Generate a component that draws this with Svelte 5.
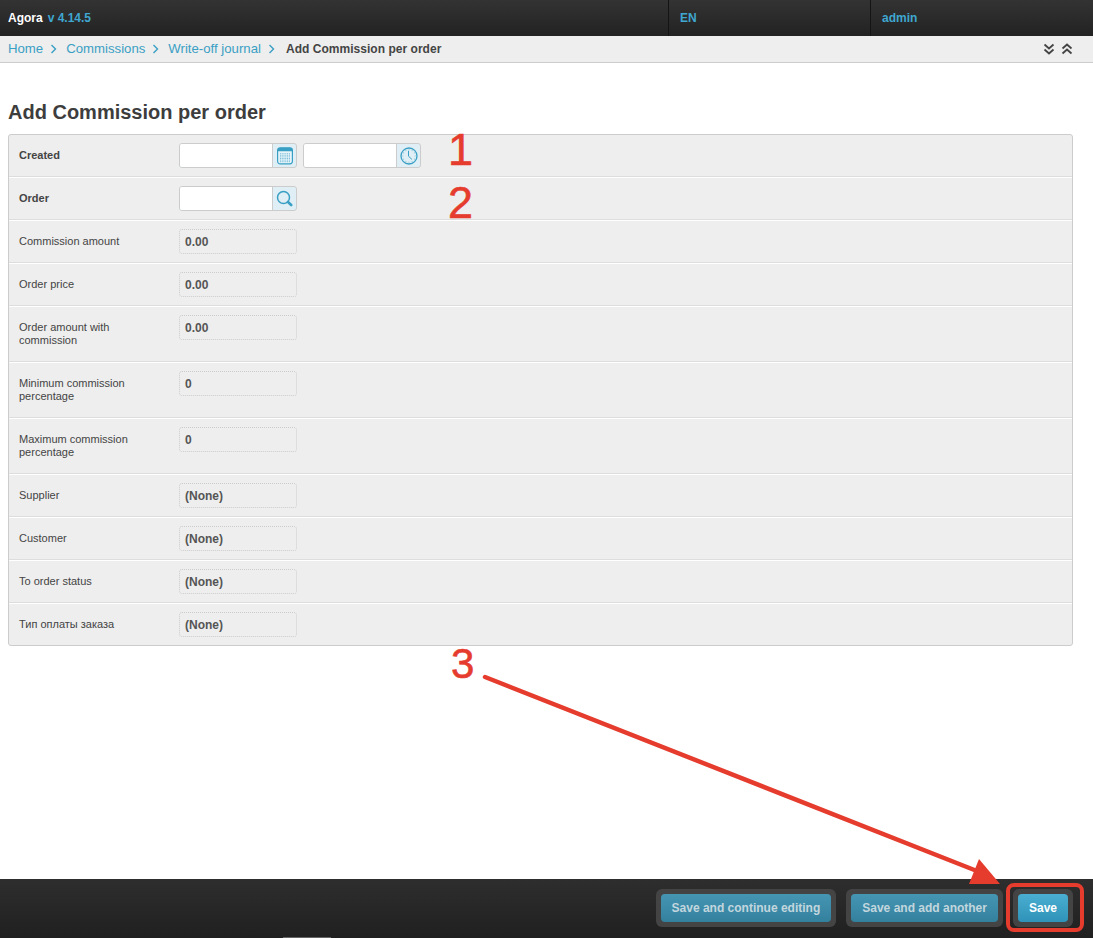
<script>
	const crumbs = ['Home', 'Commissions', 'Write-off journal'];
	const readonlyRows = [
		{ label: 'Commission amount', value: '0.00' },
		{ label: 'Order price', value: '0.00' },
		{ label: 'Order amount with commission', value: '0.00' },
		{ label: 'Minimum commission percentage', value: '0' },
		{ label: 'Maximum commission percentage', value: '0' },
		{ label: 'Supplier', value: '(None)' },
		{ label: 'Customer', value: '(None)' },
		{ label: 'To order status', value: '(None)' },
		{ label: 'Тип оплаты заказа', value: '(None)' }
	];
	const ticks = [0, 30, 60, 90, 120, 150, 180, 210, 240, 270, 300, 330];
	const cells = [0, 1, 2, 3, 4, 5];
</script>

<div class="page">
	<header class="topbar">
		<div class="brand"><b>Agora</b><span>v 4.14.5</span></div>
		<div class="cell lang">EN</div>
		<div class="cell user">admin</div>
	</header>

	<nav class="crumbs">
		{#each crumbs as c}
			<a href="#top">{c}</a>
			<svg class="sep" width="7" height="10" viewBox="0 0 7 10"><path d="M1.5 1l4 4-4 4" fill="none" stroke="#3a9fc4" stroke-width="1.4" /></svg>
		{/each}
		<span class="current">Add Commission per order</span>
		<div class="collapse">
			<svg width="12" height="12" viewBox="0 0 12 12"><path d="M1.5 1.5L6 5.5l4.5-4M1.5 6.5L6 10.5l4.5-4" fill="none" stroke="#444" stroke-width="1.8" /></svg>
			<svg width="12" height="12" viewBox="0 0 12 12"><path d="M1.5 5.5L6 1.5l4.5 4M1.5 10.5L6 6.5l4.5 4" fill="none" stroke="#444" stroke-width="1.8" /></svg>
		</div>
	</nav>

	<main class="content">
		<h1>Add Commission per order</h1>
		<div class="form">
			<div class="row">
				<div class="label strong">Created</div>
				<div class="fields">
					<div class="combo">
						<div class="input"></div>
						<div class="addon">
							<svg width="18" height="18" viewBox="0 0 18 18">
								<rect x="1.6" y="0.8" width="14.8" height="16" rx="2.5" fill="#e9f5fa" stroke="#3a9fc4" stroke-width="1.2" />
								<path d="M1.6 4.2V3.300a2.500 2.500 0 0 1 2.500-2.500h9.800a2.500 2.500 0 0 1 2.500 2.500v.9z" fill="#3a9fc4" />
								{#each cells as y}
									{#each cells as x}
										<rect x={3.9 + x * 1.8} y={6.2 + y * 1.6} width="1" height="1" fill="#6fb9d6" />
									{/each}
								{/each}
							</svg>
						</div>
					</div>
					<div class="combo">
						<div class="input"></div>
						<div class="addon">
							<svg width="18" height="18" viewBox="0 0 18 18">
								<circle cx="9" cy="9" r="8" fill="none" stroke="#3a9fc4" stroke-width="1.3" />
								{#each ticks as t}
									<rect x="8.6" y="2.4" width="0.8" height="0.9" fill="#6fb9d6" transform="rotate({t} 9 9)" />
								{/each}
								<path d="M8.500 3.800V9.200l3.400 3.200" fill="none" stroke="#3a9fc4" stroke-width="1" />
							</svg>
						</div>
					</div>
				</div>
			</div>
			<div class="row">
				<div class="label strong">Order</div>
				<div class="fields">
					<div class="combo">
						<div class="input"></div>
						<div class="addon">
							<svg width="17" height="17" viewBox="0 0 17 17">
								<circle cx="7.500" cy="7.500" r="6" fill="none" stroke="#3a9fc4" stroke-width="1.500" />
								<path d="M12 12l3.200 3" fill="none" stroke="#3a9fc4" stroke-width="2.600" stroke-linecap="round" />
							</svg>
						</div>
					</div>
				</div>
			</div>
			{#each readonlyRows as r}
				<div class="row">
					<div class="label">{r.label}</div>
					<div class="fields"><div class="readonly">{r.value}</div></div>
				</div>
			{/each}
		</div>
	</main>

	<footer class="actions">
		<div class="sliver"></div>
		<div class="btn-wrap"><button class="btn muted">Save and continue editing</button></div>
		<div class="btn-wrap"><button class="btn muted">Save and add another</button></div>
		<div class="btn-wrap"><button class="btn">Save</button></div>
	</footer>

	<!-- annotations drawn over the screenshot -->
	<span class="mark one">1</span>
	<span class="mark two">2</span>
	<span class="mark three">3</span>
	<svg class="arrow" width="1093" height="938" viewBox="0 0 1093 938">
		<path d="M485 677L982 873" stroke="#e53c2e" stroke-width="4.500" stroke-linecap="round" fill="none" />
		<path d="M1000 884L969 884L979 859z" fill="#e53c2e" />
	</svg>
	<div class="highlight"></div>
</div>

<style>
:global(body) {
	margin: 0;
	background: #fff;
}

.page {
	position: relative;
	display: flex;
	flex-direction: column;
	height: 938px;
	overflow: hidden;
	font-family: "Liberation Sans", Arial, sans-serif;
	font-size: 11px;
	color: #444;
}

.topbar {
	display: flex;
	height: 36px;
	flex: none;
	background: linear-gradient(#333, #222);
	font-size: 12px;
	font-weight: 700;
	line-height: 36px;
	color: #3fa7d0;
}
.brand {
	flex: 1;
	padding-left: 8px;
}
.brand b {
	color: #fff;
	margin-right: 5px;
}
.cell {
	box-sizing: border-box;
	border-left: 1px solid #141414;
	padding-left: 11px;
}
.lang {
	width: 202px;
}
.user {
	width: 223px;
}

.crumbs {
	display: flex;
	align-items: center;
	flex: none;
	box-sizing: border-box;
	height: 27px;
	padding: 0 20px 1px 8px;
	background: #eee;
	border-bottom: 1px solid #ccc;
	font-size: 13.200px;
}
.crumbs a {
	color: #3a9fc4;
	text-decoration: none;
}
.sep {
	margin: 0 9px 0 7px;
}
.current {
	margin-left: 2px;
	color: #444;
	font-weight: 700;
	font-size: 12px;
	letter-spacing: 0.03px;
}
.collapse {
	display: flex;
	gap: 6px;
	margin-left: auto;
}

.content {
	flex: 1;
	padding: 37px 20px 0 8px;
}
h1 {
	margin: 0 0 10px;
	font-size: 20px;
	line-height: 24px;
	font-weight: 700;
	color: #3d3d3d;
}

.form {
	background: #eee;
	border: 1px solid #ccc;
	border-radius: 3px;
}
.row {
	display: flex;
	padding: 8px 10px 7px;
	border-bottom: 1px solid #fff;
	box-shadow: 0 -1px 0 #ddd inset;
}
.row:last-child {
	border-bottom: 0;
	box-shadow: none;
	padding-bottom: 6px;
}
.label {
	box-sizing: border-box;
	width: 160px;
	flex: none;
	padding: 6px 40px 8px 0;
	line-height: 13px;
	color: #444;
}
.label.strong {
	font-weight: 700;
}
.fields {
	display: flex;
	align-self: flex-start;
	gap: 6px;
}
.combo {
	display: flex;
	box-sizing: border-box;
	height: 25px;
	background: #e0eff5;
	border: 1px solid #ccc;
	border-radius: 3px;
}
.input {
	width: 92px;
	background: #fff;
	border-right: 1px solid #ccc;
	border-radius: 2px 0 0 2px;
}
.addon {
	display: flex;
	align-items: center;
	justify-content: center;
	width: 23px;
}
.readonly {
	box-sizing: border-box;
	width: 118px;
	height: 25px;
	padding: 0 5px;
	border: 1px dotted #ccc;
	border-radius: 3px;
	font-size: 12px;
	font-weight: 700;
	line-height: 24px;
	color: #555;
}

.actions {
	position: relative;
	display: flex;
	justify-content: flex-end;
	align-items: center;
	flex: none;
	gap: 10px;
	box-sizing: border-box;
	height: 59px;
	padding: 0 20px 1px 0;
	background: linear-gradient(#2e2e2e, #202020);
}
.sliver {
	position: absolute;
	left: 283px;
	bottom: 0;
	width: 48px;
	height: 1px;
	background: #666;
}
.btn-wrap {
	padding: 5px;
	background: #444;
	border-radius: 6px;
}
.btn {
	display: block;
	height: 28px;
	padding: 0 11px;
	border: 0;
	border-radius: 4px;
	background: linear-gradient(#4aaed2, #2f93b9);
	font: 700 12px "Liberation Sans", Arial, sans-serif;
	color: #fff;
}
.btn.muted {
	background: linear-gradient(#4596b3, #33809d);
	color: #c2d6de;
}

.mark {
	position: absolute;
	font-size: 45px;
	line-height: 45px;
	color: #e53c2e;
	-webkit-text-stroke: 0.6px #e53c2e;
}
.one {
	left: 448px;
	top: 127px;
}
.two {
	left: 448px;
	top: 180px;
}
.three {
	left: 451px;
	top: 641px;
	font-size: 42px;
}
.arrow {
	position: absolute;
	left: 0;
	top: 0;
	pointer-events: none;
}
.highlight {
	position: absolute;
	left: 1006px;
	top: 883px;
	width: 78px;
	height: 49px;
	box-sizing: border-box;
	border: 4.500px solid #e53c2e;
	border-radius: 8px;
}
</style>
